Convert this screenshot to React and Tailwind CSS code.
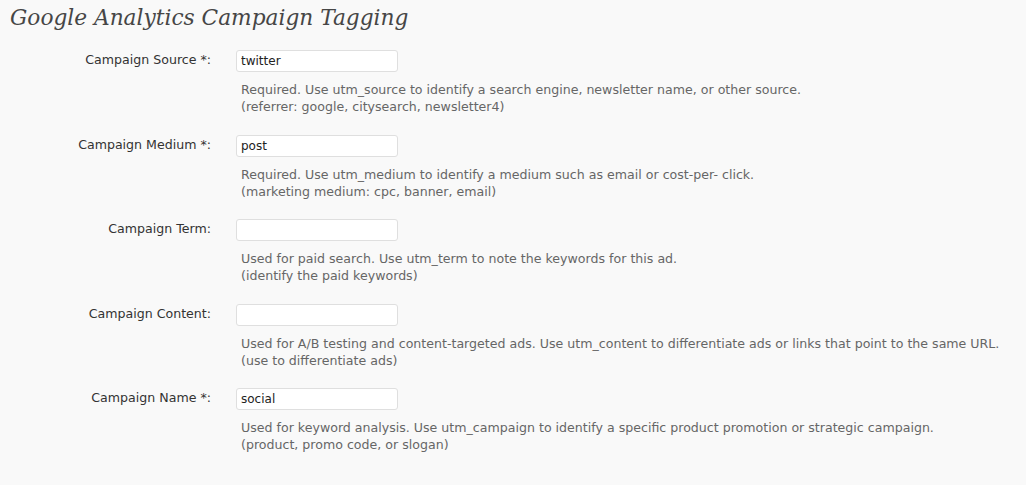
import React from 'react';

const fields = [
  {
    label: 'Campaign Source *:',
    value: 'twitter',
    help: 'Required. Use utm_source to identify a search engine, newsletter name, or other source.',
    example: '(referrer: google, citysearch, newsletter4)',
  },
  {
    label: 'Campaign Medium *:',
    value: 'post',
    help: 'Required. Use utm_medium to identify a medium such as email or cost-per- click.',
    example: '(marketing medium: cpc, banner, email)',
  },
  {
    label: 'Campaign Term:',
    value: '',
    help: 'Used for paid search. Use utm_term to note the keywords for this ad.',
    example: '(identify the paid keywords)',
  },
  {
    label: 'Campaign Content:',
    value: '',
    help: 'Used for A/B testing and content-targeted ads. Use utm_content to differentiate ads or links that point to the same URL.',
    example: '(use to differentiate ads)',
  },
  {
    label: 'Campaign Name *:',
    value: 'social',
    help: 'Used for keyword analysis. Use utm_campaign to identify a specific product promotion or strategic campaign.',
    example: '(product, promo code, or slogan)',
  },
];

const App = () => {
  return (
    <div className="min-h-[485px] w-full bg-[#f9f9f9] font-['DejaVu_Sans',sans-serif] text-[12.6px]">
      {/* Page heading */}
      <h2 className="pl-[10px] pt-[4px] h-[50px] font-['DejaVu_Serif',serif] italic text-[21.7px] leading-[28px] text-[#464646]">
        Google Analytics Campaign Tagging
      </h2>

      <div className="flex flex-col gap-[19.5px]">
        {fields.map((f) => (
          <div key={f.label} className="grid grid-cols-[211px_1fr] gap-x-[25px]">
            <label className="text-right text-[#333] leading-[17px] pt-px">{f.label}</label>
            <div className="flex flex-col">
              <input
                type="text"
                defaultValue={f.value}
                className="w-[162px] h-[22px] bg-white border border-[#dfdfdf] rounded-[3px] px-[4px] text-[12px] text-[#222] outline-none"
              />
              <div className="mt-[9px] pl-[5px] text-[#666] leading-[17px]">
                <div>{f.help}</div>
                <div>{f.example}</div>
              </div>
            </div>
          </div>
        ))}
      </div>
    </div>
  );
};

export default App;
